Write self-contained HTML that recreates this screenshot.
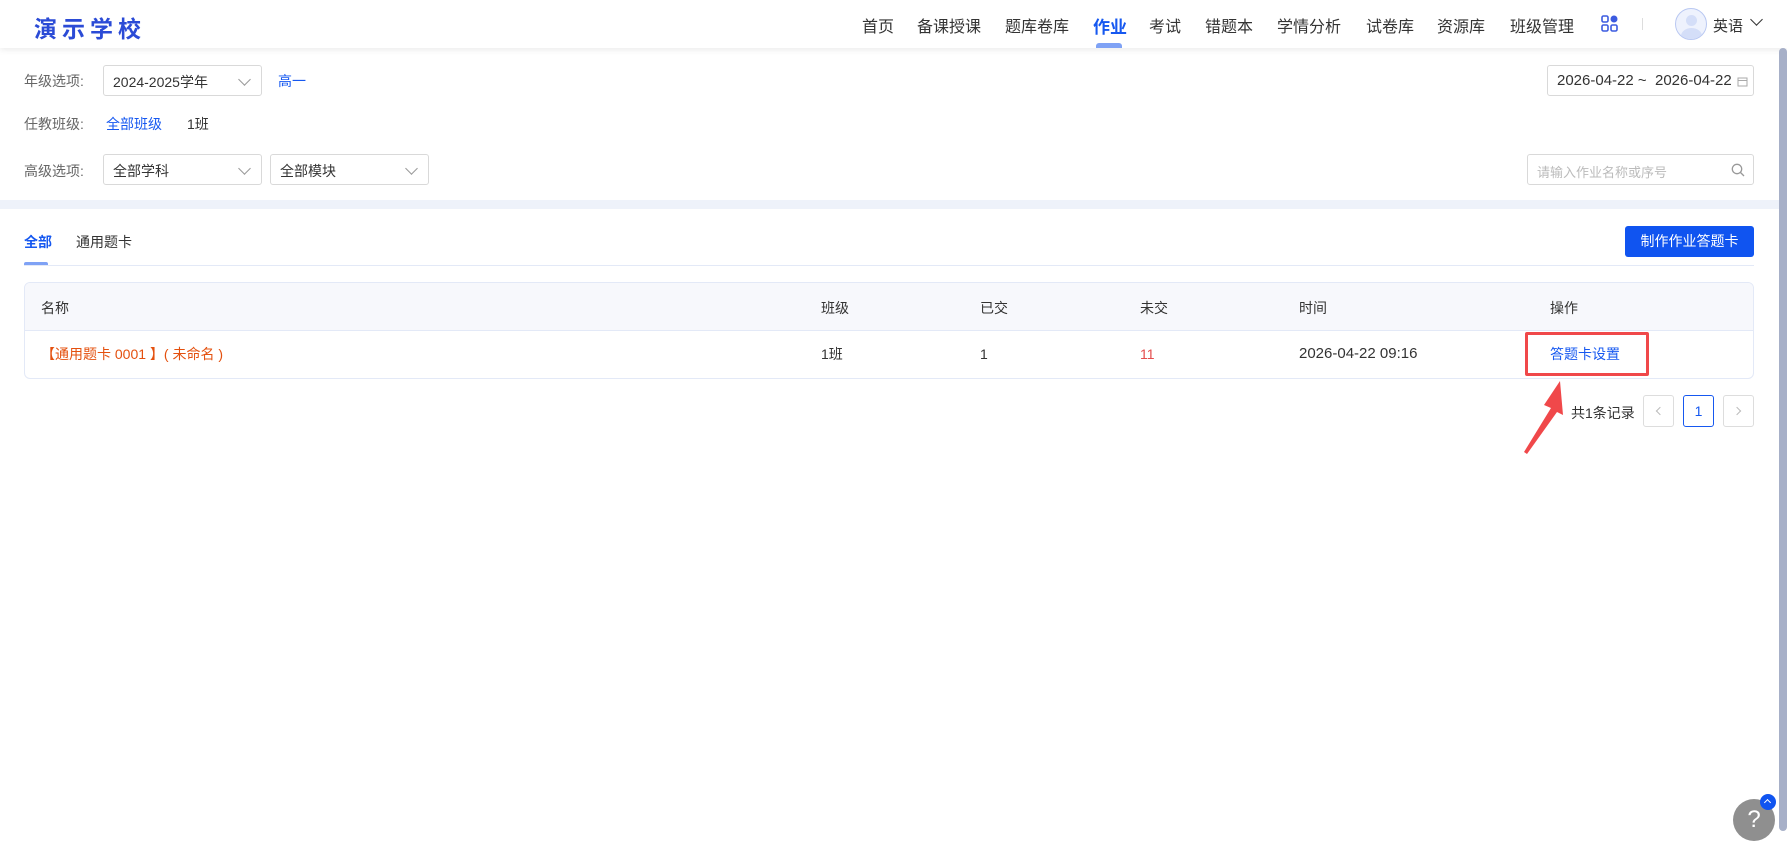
<!DOCTYPE html>
<html><head><meta charset="utf-8"><style>
*{margin:0;padding:0;box-sizing:border-box}
body{width:1787px;height:863px;overflow:hidden;background:#fff;font-family:"Liberation Sans","Noto Sans CJK SC",sans-serif;color:#333;position:relative;font-size:14px}
.a{position:absolute;white-space:nowrap}
.hdr{position:absolute;left:0;top:0;width:1787px;height:48px;background:#fff;box-shadow:0 2px 6px rgba(0,0,0,.08)}
.nav{position:absolute;top:13px;font-size:16px;color:#333}
.sel{position:absolute;border:1px solid #d9d9d9;border-radius:3px;height:31px;font-size:14px;padding:6px 9px;color:#333}
.chev{position:absolute;right:12px;top:9px;width:9px;height:9px;border-right:1.3px solid #999;border-bottom:1.3px solid #999;transform:rotate(45deg)}
.lbl{color:#666;font-size:14px}
.th{position:absolute;top:298px;font-size:14px;color:#333;line-height:20px}
.td{position:absolute;top:344px;font-size:14px;color:#333;line-height:20px}
.pg{position:absolute;top:395px;width:31px;height:32px;border:1px solid #ddd;border-radius:3px;background:#fff}
</style></head><body>
<div class="hdr"></div>
<div class="a" style="left:34px;top:10px;font-size:23px;font-weight:bold;color:#2b4bd6;letter-spacing:5px">演示学校</div>
<div class="nav a" style="left:862px">首页</div>
<div class="nav a" style="left:917px">备课授课</div>
<div class="nav a" style="left:1005px">题库卷库</div>
<div class="nav a" style="left:1093px;color:#1658f0;font-weight:bold;font-size:17px">作业</div>
<div class="a" style="left:1096px;top:43px;width:26px;height:5px;background:#7fa2f5;border-radius:3px 3px 0 0"></div>
<div class="nav a" style="left:1149px">考试</div>
<div class="nav a" style="left:1205px">错题本</div>
<div class="nav a" style="left:1277px">学情分析</div>
<div class="nav a" style="left:1366px">试卷库</div>
<div class="nav a" style="left:1437px">资源库</div>
<div class="nav a" style="left:1510px">班级管理</div>
<svg class="a" style="left:1601px;top:15px" width="18" height="18" viewBox="0 0 18 18"><rect x="1" y="1" width="6" height="6" rx="1.5" fill="none" stroke="#3c5be0" stroke-width="1.6"/><rect x="1" y="10" width="6" height="6" rx="1.5" fill="none" stroke="#3c5be0" stroke-width="1.6"/><rect x="10" y="10" width="6" height="6" rx="1.5" fill="none" stroke="#3c5be0" stroke-width="1.6"/><circle cx="13" cy="4" r="3.5" fill="#3c5be0"/></svg>
<div class="a" style="left:1642px;top:18px;width:1px;height:12px;background:#ddd"></div>
<div class="a" style="left:1675px;top:8px;width:32px;height:32px;border-radius:50%;border:1px solid #b9c8f2;background:#eef2fd;overflow:hidden"><div style="position:absolute;left:10px;top:6px;width:11px;height:11px;border-radius:50%;background:#d4def8"></div><div style="position:absolute;left:5px;top:19px;width:21px;height:16px;border-radius:50%;background:#d4def8"></div></div>
<div class="a" style="left:1713px;top:15px;font-size:15px">英语</div>
<div class="a" style="left:1752px;top:15px;width:9px;height:9px;border-right:1.5px solid #333;border-bottom:1.5px solid #333;transform:rotate(45deg)"></div>

<div class="a lbl" style="left:24px;top:71px">年级选项:</div>
<div class="sel" style="left:103px;top:65px;width:159px">2024-2025学年<span class="chev"></span></div>
<div class="a" style="left:278px;top:71px;color:#1658f0">高一</div>
<div class="a lbl" style="left:24px;top:114px">任教班级:</div>
<div class="a" style="left:106px;top:114px;color:#1658f0">全部班级</div>
<div class="a" style="left:187px;top:114px">1班</div>
<div class="a lbl" style="left:24px;top:161px">高级选项:</div>
<div class="sel" style="left:103px;top:154px;width:159px">全部学科<span class="chev"></span></div>
<div class="sel" style="left:270px;top:154px;width:159px">全部模块<span class="chev"></span></div>
<div class="sel" style="left:1547px;top:65px;width:207px;padding-left:9px;font-size:15px">2026-04-22 ~ &nbsp;2026-04-22
<svg style="position:absolute;right:5px;top:10px" width="11" height="11" viewBox="0 0 11 11"><rect x="1" y="2" width="9" height="8" fill="none" stroke="#aaa"/><line x1="1" y1="4.5" x2="10" y2="4.5" stroke="#aaa"/></svg></div>
<div class="sel" style="left:1527px;top:154px;width:227px;color:#bbb;font-size:13px;padding-top:7px">请输入作业名称或序号
<svg style="position:absolute;right:8px;top:8px" width="14" height="14" viewBox="0 0 14 14"><circle cx="6" cy="6" r="4.7" fill="none" stroke="#999" stroke-width="1.3"/><line x1="9.5" y1="9.5" x2="13" y2="13" stroke="#999" stroke-width="1.3"/></svg></div>

<div class="a" style="left:0;top:200px;width:1779px;height:9px;background:#eef2fa"></div>

<div class="a" style="left:24px;top:232px;color:#1658f0;font-weight:bold">全部</div>
<div class="a" style="left:24px;top:262px;width:24px;height:3px;background:#7fa2f5;border-radius:2px 2px 0 0"></div>
<div class="a" style="left:76px;top:232px">通用题卡</div>
<div class="a" style="left:24px;top:265px;width:1730px;height:1px;background:#e3e9f7"></div>
<div class="a" style="left:1625px;top:226px;width:129px;height:31px;background:#1054f0;border-radius:3px;color:#fff;font-size:14px;text-align:center;line-height:31px">制作作业答题卡</div>

<div class="a" style="left:24px;top:282px;width:1730px;height:97px;border:1px solid #e3e9f7;border-radius:6px;overflow:hidden">
<div style="height:48px;background:#f7f8fc;border-bottom:1px solid #e3e9f7"></div></div>
<div class="th a" style="left:41px">名称</div>
<div class="th a" style="left:821px">班级</div>
<div class="th a" style="left:980px">已交</div>
<div class="th a" style="left:1140px">未交</div>
<div class="th a" style="left:1299px">时间</div>
<div class="th a" style="left:1550px">操作</div>
<div class="td a" style="left:41px;color:#e4500e">【通用题卡 0001 】( 未命名 )</div>
<div class="td a" style="left:821px">1班</div>
<div class="td a" style="left:980px">1</div>
<div class="td a" style="left:1140px;color:#e44d4d">11</div>
<div class="td a" style="left:1299px;font-size:15px">2026-04-22 09:16</div>
<div class="td a" style="left:1550px;color:#1658f0">答题卡设置</div>
<div class="a" style="left:1525px;top:332px;width:124px;height:44px;border:3px solid #f0484a;border-radius:2px"></div>
<svg class="a" style="left:1515px;top:375px" width="60" height="85" viewBox="0 0 60 85"><polygon points="45,6 29,30 36,33 9,77 12,79 42,37 48,40" fill="#f0484a"/></svg>

<div class="a" style="left:1571px;top:403px;font-size:14px">共1条记录</div>
<div class="pg" style="left:1643px"><div style="position:absolute;left:13px;top:12px;width:6px;height:6px;border-left:1px solid #bbb;border-bottom:1px solid #bbb;transform:rotate(45deg)"></div></div>
<div class="pg" style="left:1683px;border-color:#1658f0;color:#1658f0;text-align:center;line-height:30px">1</div>
<div class="pg" style="left:1723px"><div style="position:absolute;left:10px;top:12px;width:6px;height:6px;border-right:1px solid #bbb;border-top:1px solid #bbb;transform:rotate(45deg)"></div></div>

<div class="a" style="left:1779px;top:48px;width:8px;height:783px;background:#a7b0c8;border-radius:4px"></div>
<div class="a" style="left:1733px;top:799px;width:42px;height:42px;border-radius:50%;background:#8f8f8f;color:#fff;font-size:24px;text-align:center;line-height:42px">?</div>
<div class="a" style="left:1760px;top:794px;width:16px;height:16px;border-radius:50%;background:#1054f0"><div style="position:absolute;left:5px;top:6px;width:5px;height:5px;border-left:1.2px solid #fff;border-top:1.2px solid #fff;transform:rotate(45deg)"></div></div>
</body></html>
